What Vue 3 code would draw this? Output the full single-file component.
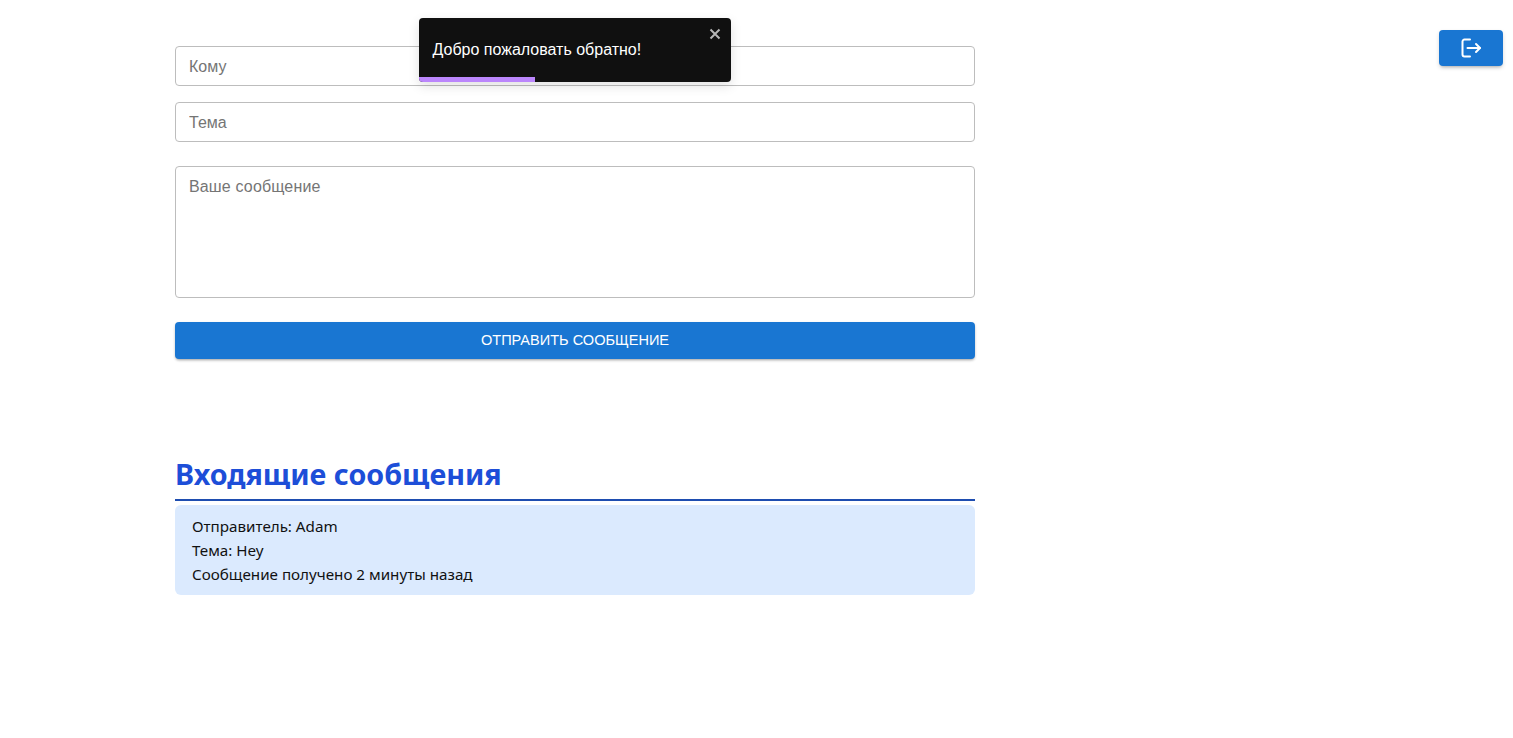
<script setup>
const lines = ['Отправитель: Adam', 'Тема: Hey', 'Сообщение получено 2 минуты назад']
</script>

<template>
  <div class="page">
    <main class="column">
      <form class="form" @submit.prevent>
        <input class="field" type="text" placeholder="Кому" />
        <input class="field" type="text" placeholder="Тема" />
        <textarea class="field area" placeholder="Ваше сообщение"></textarea>
        <button class="send" type="submit">Отправить сообщение</button>
      </form>
      <section class="inbox">
        <h2 class="title">Входящие сообщения</h2>
        <article class="message">
          <p v-for="line in lines" :key="line" class="line">{{ line }}</p>
        </article>
      </section>
    </main>

    <button class="logout" type="button" aria-label="Выйти">
      <svg width="24" height="24" viewBox="0 0 24 24" fill="none" stroke="currentColor" stroke-width="2" stroke-linecap="round" stroke-linejoin="round">
        <path d="M11 3.5H5.5a2 2 0 0 0-2 2v13a2 2 0 0 0 2 2H11" />
        <path d="M8.5 12H21" />
        <path d="M17 8l4 4-4 4" />
      </svg>
    </button>

    <div class="toast" role="alert">
      <span class="toast-text">Добро пожаловать обратно!</span>
      <button class="toast-close" type="button" aria-label="Закрыть">
        <svg width="14" height="14" viewBox="0 0 14 14" fill="none" stroke="currentColor" stroke-width="2">
          <path d="M2.5 2.5l9 9M11.5 2.5l-9 9" />
        </svg>
      </button>
      <div class="progress"></div>
    </div>
  </div>
</template>

<style>
html, body { margin: 0; background: #fff; }
</style>

<style scoped>
.page {
  position: relative;
  height: 738px;
  overflow: hidden;
  background: #fff;
  font-family: "Liberation Sans", Arial, sans-serif;
}
.column {
  width: 800px;
  margin-left: 175px;
  padding-top: 46px;
}
.form {
  display: flex;
  flex-direction: column;
}
.field {
  box-sizing: border-box;
  display: block;
  width: 100%;
  height: 40px;
  margin-bottom: 16px;
  padding: 2px 13px 0;
  border: 1px solid #bdbdbd;
  border-radius: 4px;
  outline: none;
  background: #fff;
  color: #222;
  font: 16px/24px "Liberation Sans", Arial, sans-serif;
}
.field::placeholder { color: #757575; opacity: 1; }
.area {
  height: 132px;
  margin-top: 8px;
  margin-bottom: 24px;
  padding: 8px 13px;
  letter-spacing: .15px;
  resize: none;
}
.send {
  height: 37px;
  padding: 0 0 1px;
  border: 0;
  border-radius: 4px;
  background: #1976d2;
  color: #fff;
  font: 500 14.55px/36px "Liberation Sans", Arial, sans-serif;
  text-transform: uppercase;
  box-shadow: 0 2px 3px -1px rgba(0, 0, 0, .3), 0 1px 3px rgba(0, 0, 0, .12);
}
.inbox { margin-top: 96px; }
.title {
  margin: 0 0 4px;
  height: 44px;
  border-bottom: 2px solid #1e4db0;
  color: #1d4ed8;
  font: 700 28.7px/38px "Noto Sans", "Open Sans", sans-serif;
}
.message {
  box-sizing: border-box;
  height: 90px;
  padding: 9px 17px;
  border-radius: 6px;
  background: #dbeafe;
  color: #111;
}
.line {
  margin: 0;
  font: 15.2px/24px "Noto Sans", "Open Sans", sans-serif;
}
.logout {
  position: absolute;
  top: 30px;
  right: 10px;
  display: flex;
  align-items: center;
  justify-content: center;
  width: 64px;
  height: 36px;
  padding: 0;
  border: 0;
  border-radius: 4px;
  background: #1976d2;
  color: #fff;
  box-shadow: 0 3px 3px -2px rgba(0, 0, 0, .2), 0 2px 4px rgba(0, 0, 0, .14);
}
.toast {
  position: absolute;
  top: 18px;
  left: 419px;
  box-sizing: border-box;
  width: 312px;
  height: 64px;
  padding: 21.5px 13.5px 0;
  overflow: hidden;
  border-radius: 4px;
  background: #101010;
  color: #fff;
  box-shadow: 0 4px 12px rgba(0, 0, 0, .12);
}
.toast-text {
  display: block;
  font-size: 16px;
  line-height: 20px;
}
.toast-close {
  position: absolute;
  top: 9px;
  right: 9px;
  display: flex;
  padding: 0;
  border: 0;
  background: none;
  color: #b5b5b5;
}
.progress {
  position: absolute;
  left: 0;
  bottom: 0;
  width: 116px;
  height: 5px;
  background: #bb86fc;
}
</style>
